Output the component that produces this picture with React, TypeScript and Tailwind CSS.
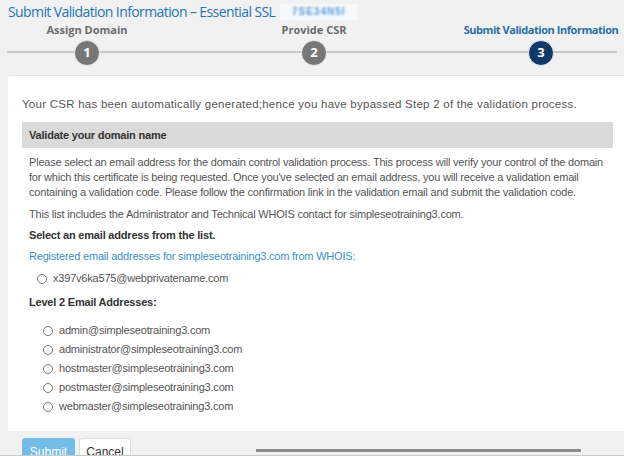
import React, { useState } from 'react';

const level2 = [
    'admin@simpleseotraining3.com',
    'administrator@simpleseotraining3.com',
    'hostmaster@simpleseotraining3.com',
    'postmaster@simpleseotraining3.com',
    'webmaster@simpleseotraining3.com',
];

function Radio({ checked, onClick }: { checked: boolean; onClick: () => void }) {
    return (
        <span
            onClick={onClick}
            className="w-[10px] h-[10px] rounded-full border border-[#777] bg-white flex items-center justify-center shrink-0 cursor-pointer"
        >
            {checked && <span className="w-[4px] h-[4px] rounded-full bg-[#333]"></span>}
        </span>
    );
}

function Step({ num, label, active }: { num: number; label: string; active?: boolean }) {
    return (
        <div className="w-[154px] flex flex-col items-center">
            <div
                className={`h-[14px] leading-[14px] text-[11px] font-bold whitespace-nowrap ${active ? 'text-[#2b6ea6] tracking-[-0.45px]' : 'text-[#6b6b6b]'}`}
            >
                {label}
            </div>
            <div
                className={`mt-[3px] w-[26px] h-[26px] rounded-full flex items-center justify-center text-white text-[13px] font-bold border border-[#e8e8e8] ${active ? 'bg-[#0f3a68]' : 'bg-[#777777]'}`}
            >
                {num}
            </div>
        </div>
    );
}

export default function App() {
    const [selected, setSelected] = useState<string | null>(null);

    return (
        <div
            className="w-[624px] h-[456px] overflow-hidden bg-[#f1f1f1] relative"
            style={{ fontFamily: '"Liberation Sans", Arial, sans-serif' }}
        >
            {/* title */}
            <div className="flex items-center h-[20px] pl-2 pt-[3px]">
                <h1
                    className="text-[14px] leading-[18px] text-[#2676b5] font-medium tracking-[-0.6px]"
                    style={{ fontFamily: '"Open Sans", sans-serif' }}
                >
                    Submit Validation Information – Essential SSL
                </h1>
                <span className="ml-[5px] w-[77px] h-[16px] bg-[#f6f9fc] flex items-center justify-center overflow-hidden">
                    <span className="text-[10px] text-[#5b9bd5] tracking-[1px] blur-[1px] font-bold">7SE34N5I</span>
                </span>
            </div>

            {/* steps */}
            <div className="relative h-[52px] pt-[3px]" style={{ fontFamily: '"Open Sans", sans-serif' }}>
                <div className="absolute left-[7px] right-[7px] top-[31px] h-[2px] bg-[#c8c8c8]"></div>
                <div className="relative flex pl-[10px] gap-[73px]">
                    <Step num={1} label="Assign Domain" />
                    <Step num={2} label="Provide CSR" />
                    <Step num={3} label="Submit Validation Information" active />
                </div>
            </div>

            {/* card */}
            <div className="ml-2 mt-[3px] h-[356px] bg-white rounded-tl-[3px] border-t border-[#e4e4e4] pl-[14px] pr-[11px] pt-[21px] text-[11px] tracking-[-0.2px] leading-[15px] text-[#555]">
                <p className="text-[11.5px] tracking-[0.25px]">
                    Your CSR has been automatically generated;hence you have bypassed Step 2 of the validation process.
                </p>

                <div className="mt-[10px] h-[26px] bg-[#dadada] flex items-center px-[7px] font-bold text-[#333]">
                    Validate your domain name
                </div>

                <div className="pl-[7px]">
                    <p className="mt-[7px]">
                        Please select an email address for the domain control validation process. This process will verify your control of the domain
                        for which this certificate is being requested. Once you've selected an email address, you will receive a validation email
                        containing a validation code. Please follow the confirmation link in the validation email and submit the validation code.
                    </p>
                    <p className="mt-[7px]">This list includes the Administrator and Technical WHOIS contact for simpleseotraining3.com.</p>
                    <p className="mt-[6px] font-bold text-[#333]">Select an email address from the list.</p>
                    <p className="mt-[6px] text-[#3b8fd0]">Registered email addresses for simpleseotraining3.com from WHOIS:</p>
                    <label className="mt-[7px] pl-[8px] flex items-center gap-[6px]">
                        <Radio
                            checked={selected === 'x397v6ka575@webprivatename.com'}
                            onClick={() => setSelected('x397v6ka575@webprivatename.com')}
                        />
                        x397v6ka575@webprivatename.com
                    </label>
                    <p className="mt-[9px] font-bold text-[#333]">Level 2 Email Addresses:</p>
                    <div className="mt-[13px] pl-[14px] flex flex-col gap-[4px]">
                        {level2.map((email) => (
                            <label key={email} className="flex items-center gap-[6px]">
                                <Radio checked={selected === email} onClick={() => setSelected(email)} />
                                {email}
                            </label>
                        ))}
                    </div>
                </div>
            </div>

            {/* buttons */}
            <div className="flex items-start pl-[22px] pt-[7px]">
                <button className="w-[53px] h-[28px] rounded-[3px] bg-[#75bbe8] text-white text-[12px]">Submit</button>
                <button className="ml-[4px] w-[52px] h-[28px] rounded-[3px] bg-white border border-[#dcdcdc] text-[#333] text-[12px]">
                    Cancel
                </button>
                <div className="ml-[125px] mt-[11px] w-[325px] h-[3px] bg-[#8c8c8c]"></div>
            </div>
            <div className="absolute left-0 right-0 bottom-0 h-[1px] bg-[#c9c9c9]"></div>
        </div>
    );
}
